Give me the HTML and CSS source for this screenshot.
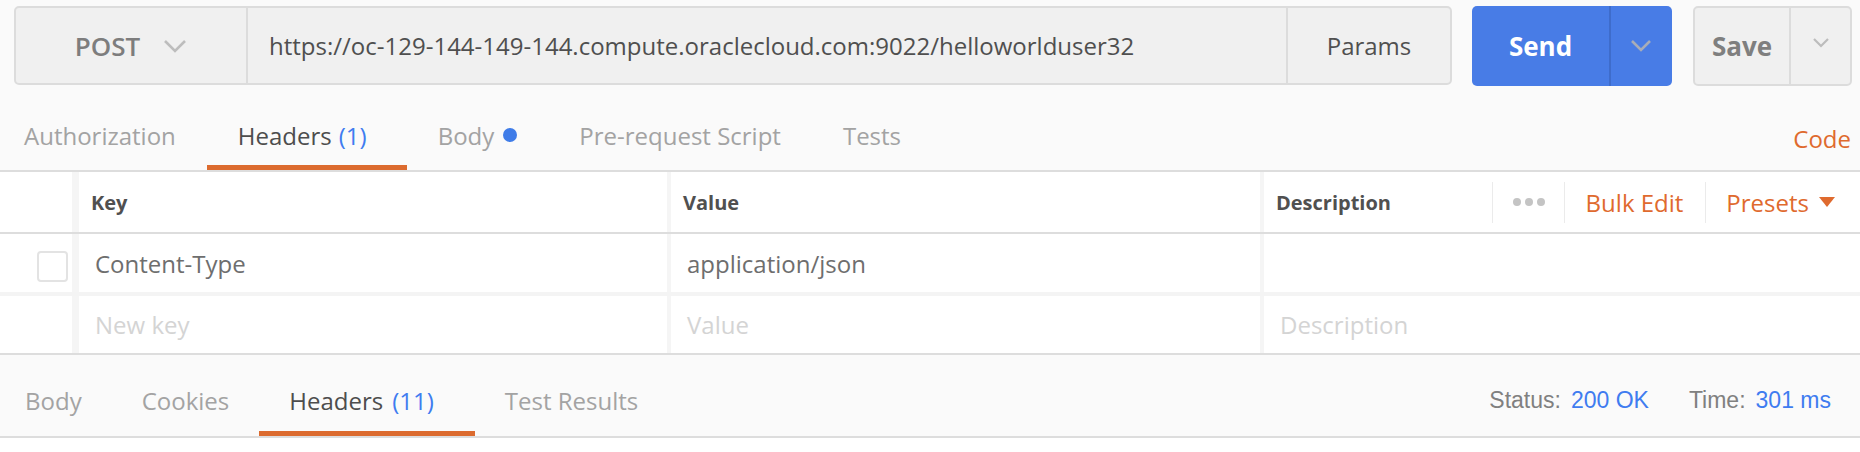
FILE: index.html
```html
<!DOCTYPE html>
<html>
<head>
<meta charset="utf-8">
<link rel="stylesheet" href="styles.css">
</head>
<body>
<div class="app">
  <div class="request-bar">
    <div class="url-group">
      <div class="method">
        <span class="method-label">POST</span>
        <svg class="chev-method" width="24" height="14" viewBox="0 0 24 14"><polyline points="2,2 12,12 22,2"/></svg>
      </div>
      <div class="url">https://oc-129-144-149-144.compute.oraclecloud.com:9022/helloworlduser32</div>
      <div class="params">Params</div>
    </div>
    <div class="send">
      <div class="send-main">Send</div>
      <div class="send-drop"><svg class="chev-send" width="22" height="14" viewBox="0 0 22 14"><polyline points="2,2 11,11 20,2"/></svg></div>
    </div>
    <div class="save">
      <div class="save-main">Save</div>
      <div class="save-drop"><svg class="chev-save" width="18" height="12" viewBox="0 0 18 12"><polyline points="2,2 9,9 16,2"/></svg></div>
    </div>
  </div>

  <div class="req-tabs">
    <div class="tab first">Authorization</div>
    <div class="tab active">Headers <span class="count">(1)</span></div>
    <div class="tab">Body <span class="dot"></span></div>
    <div class="tab">Pre-request Script</div>
    <div class="tab">Tests</div>
    <div class="spacer"></div>
    <div class="code">Code</div>
  </div>

  <div class="kv">
    <div class="kv-row kv-head">
      <div class="c-check"></div>
      <div class="c-key"><span class="head-label">Key</span></div>
      <div class="c-value"><span class="head-label">Value</span></div>
      <div class="c-desc">
        <span class="head-label grow">Description</span>
        <div class="actions">
          <div class="act act-dots"><span class="d"></span><span class="d"></span><span class="d"></span></div>
          <div class="act act-link">Bulk Edit</div>
          <div class="act act-link act-last">Presets <span class="tri"></span></div>
        </div>
      </div>
    </div>
    <div class="kv-row kv-data first-data">
      <div class="c-check"><span class="checkbox"></span></div>
      <div class="c-key"><span class="cell-text">Content-Type</span></div>
      <div class="c-value"><span class="cell-text">application/json</span></div>
      <div class="c-desc"><span class="cell-text"></span></div>
    </div>
    <div class="kv-row kv-data last-data">
      <div class="c-check"></div>
      <div class="c-key"><span class="cell-text ph">New key</span></div>
      <div class="c-value"><span class="cell-text ph">Value</span></div>
      <div class="c-desc"><span class="cell-text ph">Description</span></div>
    </div>
  </div>

  <div class="res-tabs">
    <div class="tab first">Body</div>
    <div class="tab">Cookies</div>
    <div class="tab active">Headers <span class="count">(11)</span></div>
    <div class="tab">Test Results</div>
    <div class="spacer"></div>
    <div class="meta">
      <span class="meta-label">Status:</span>
      <span class="meta-val">200 OK</span>
      <span class="meta-label meta-gap">Time:</span>
      <span class="meta-val">301 ms</span>
    </div>
  </div>
</div>
</body>
</html>
```

FILE: styles.css
```css
* { box-sizing: border-box; }
html, body { margin: 0; padding: 0; }
body {
  background: #ffffff;
  font-family: "Open Sans", "Liberation Sans", sans-serif;
  width: 1860px;
  height: 452px;
  overflow: hidden;
}
.app { background: #fafafa; }

/* request bar */
.request-bar {
  display: flex;
  padding: 6px 8px 0 14px;
  height: 86px;
}
.url-group {
  flex: 1;
  display: flex;
  height: 79px;
  background: #f0f0f0;
  border: 2px solid #dcdcdc;
  border-radius: 5px;
}
.method {
  width: 232px;
  display: flex;
  align-items: center;
  justify-content: center;
  gap: 23px;
  border-right: 2px solid #dcdcdc;
}
.method-label {
  font-size: 26px;
  font-weight: 600;
  color: #7d7d7d;
}
.chev-method polyline, .chev-send polyline, .chev-save polyline {
  fill: none;
  stroke-width: 2.6;
  stroke-linecap: butt;
  stroke-linejoin: miter;
}
.chev-method polyline { stroke: #bdbdbd; }
.url {
  flex: 1;
  display: flex;
  align-items: center;
  padding-left: 21px;
  font-size: 24px;
  color: #4f4f4f;
  white-space: nowrap;
}
.params {
  width: 164px;
  display: flex;
  align-items: center;
  justify-content: center;
  border-left: 2px solid #dcdcdc;
  font-size: 24px;
  color: #505050;
}
.send {
  margin-left: 20px;
  width: 200px;
  height: 80px;
  display: flex;
  background: #487ce6;
  border-radius: 5px;
}
.send-main {
  width: 139px;
  display: flex;
  align-items: center;
  justify-content: center;
  font-size: 26px;
  font-weight: 700;
  color: #ffffff;
  border-right: 2px solid #3e6ccb;
}
.send-drop {
  flex: 1;
  display: flex;
  align-items: center;
  justify-content: center;
  padding-right: 2px;
}
.chev-send polyline { stroke: #a8adb8; }
.save {
  margin-left: 21px;
  width: 159px;
  height: 80px;
  display: flex;
  background: #f0f0f0;
  border: 2px solid #dcdcdc;
  border-radius: 5px;
}
.save-main {
  width: 96px;
  display: flex;
  align-items: center;
  justify-content: center;
  font-size: 26px;
  font-weight: 700;
  color: #7f7f7f;
  border-right: 2px solid #dcdcdc;
}
.save-drop {
  flex: 1;
  display: flex;
  align-items: center;
  justify-content: center;
  padding-bottom: 6px;
}
.chev-save polyline { stroke: #bcbcbc; stroke-width: 2.2; }

/* tabs */
.req-tabs, .res-tabs {
  display: flex;
  align-items: stretch;
  border-bottom: 2px solid #dddddd;
  background: #fafafa;
}
.req-tabs { height: 86px; }
.res-tabs { height: 83px; }
.tab {
  display: flex;
  align-items: center;
  padding: 19px 31px 0 31px;
  border-bottom: 5px solid transparent;
  font-size: 24px;
  color: #a3a3a3;
  white-space: nowrap;
}
.res-tabs .tab { padding: 15px 30px 0 30px; }
.tab.first { padding-left: 24px; }
.res-tabs .tab.first { padding-left: 25px; }
.tab.active {
  color: #4d4d4d;
  border-bottom-color: #dc6b2f;
}
.count {
  color: #3f7cf0;
  margin-left: 7px;
  margin-right: 9px;
}
.res-tabs .count { margin-left: 9px; margin-right: 11px; }
.dot {
  display: inline-block;
  width: 14px;
  height: 14px;
  border-radius: 50%;
  background: #3f7ce8;
  margin-left: 9px;
}
.spacer { flex: 1; }
.code {
  display: flex;
  align-items: center;
  padding-top: 21px;
  padding-right: 9px;
  font-size: 24px;
  color: #df6a2e;
}

/* key value editor */
.kv { background: #ffffff; }
.kv-row { display: flex; }
.kv-head {
  height: 62px;
  border-bottom: 2px solid #dddddd;
}
.kv-data.first-data {
  height: 62px;
  border-bottom: 4px solid #f4f4f4;
}
.kv-data.last-data {
  height: 59px;
  border-bottom: 2px solid #dddddd;
}
.c-check {
  width: 72px;
  display: flex;
  align-items: center;
  justify-content: flex-end;
  padding-right: 4px;
}
.c-key {
  width: 595px;
  border-left: 7px solid #f5f5f5;
  display: flex;
  align-items: center;
}
.c-value {
  width: 593px;
  border-left: 4px solid #f5f5f5;
  display: flex;
  align-items: center;
}
.c-desc {
  flex: 1;
  border-left: 4px solid #f5f5f5;
  display: flex;
  align-items: center;
}
.head-label {
  padding-left: 12px;
  font-size: 20px;
  font-weight: 700;
  color: #505050;
}
.grow { flex: 1; }
.actions {
  display: flex;
  align-items: center;
  height: 100%;
}
.act {
  display: flex;
  align-items: center;
  height: 41px;
  border-left: 1px solid #ebebeb;
  padding: 0 21px 0 20px;
  font-size: 24px;
}
.act-dots { gap: 4px; padding-left: 20px; padding-right: 19px; }
.d {
  width: 8px;
  height: 8px;
  border-radius: 50%;
  background: #c4c4c4;
}
.act-link { color: #df6a2e; padding-left: 21px; padding-right: 22px; }
.act-last { padding-left: 20px; padding-right: 25px; }
.tri {
  display: inline-block;
  width: 0;
  height: 0;
  margin-left: 10px;
  border-left: 8px solid transparent;
  border-right: 8px solid transparent;
  border-top: 10px solid #df6a2e;
}
.checkbox {
  width: 31px;
  height: 31px;
  border: 2px solid #e3e3e3;
  border-radius: 4px;
  margin-top: 6px;
}
.cell-text {
  padding-left: 16px;
  font-size: 24px;
  color: #6e6e6e;
}
.ph { color: #d4d4d4; }

/* response meta */
.meta {
  display: flex;
  align-items: center;
  padding-top: 9px;
  padding-right: 29px;
  font-family: "Liberation Sans", "Open Sans", sans-serif;
  font-size: 23px;
  white-space: nowrap;
}
.meta-label { color: #808080; }
.meta-val { color: #3f7cf0; margin-left: 10px; }
.meta-gap { margin-left: 40px; }
```
